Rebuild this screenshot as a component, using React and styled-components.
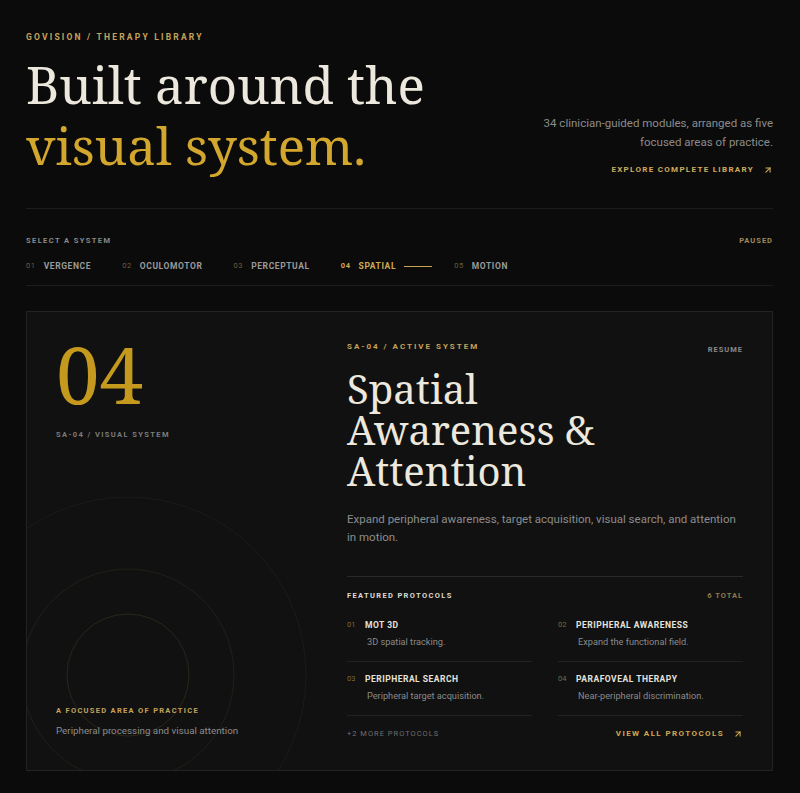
import styled, { createGlobalStyle } from 'styled-components';
import { ArrowUpRight } from 'lucide-react';

const GlobalStyle = createGlobalStyle`
  html, body {
    margin: 0;
    padding: 0;
    background: #0b0b0b;
  }
  body {
    font-family: Roboto, 'Noto Sans', sans-serif;
    -webkit-font-smoothing: antialiased;
  }
  * { box-sizing: border-box; }
`;

const serif = `'Noto Serif', 'Liberation Serif', 'DejaVu Serif', serif`;

const Page = styled.div`
  padding: 31px 27px 24px 26px;
  min-height: 793px;
  background: #0b0b0b;
`;

const Label = styled.div`
  font-family: Roboto, sans-serif;
  font-size: ${(p) => p.size || 8}px;
  font-weight: ${(p) => (p.light ? 400 : 700)};
  letter-spacing: ${(p) => p.spacing ?? 2}px;
  text-transform: uppercase;
  line-height: 12px;
  color: ${(p) => p.color || '#8a8a8a'};
  display: flex;
  align-items: center;
  gap: 8px;
  white-space: nowrap;
`;

const Header = styled.header`
  display: flex;
  justify-content: space-between;
  align-items: flex-end;
  padding-bottom: 32px;
  border-bottom: 1px solid #1c1c1c;
`;

const HeroTitle = styled.h1`
  margin: 11px 0 0;
  font-family: ${serif};
  font-weight: 400;
  font-size: 51px;
  line-height: 61px;
  color: #ece8de;
  & span {
    display: block;
    color: #d3a72d;
  }
`;

const Intro = styled.div`
  display: flex;
  flex-direction: column;
  align-items: flex-end;
  gap: 12px;
`;

const IntroText = styled.p`
  margin: 0;
  text-align: right;
  font-size: 11.5px;
  line-height: 19px;
  color: #8b8b8b;
  max-width: 236px;
`;

const LinkRow = styled(Label)`
  gap: 9px;
`;

const Nav = styled.nav`
  padding: 26px 0 13px;
  border-bottom: 1px solid #1c1c1c;
  display: flex;
  flex-direction: column;
  gap: 13px;
`;

const NavHead = styled.div`
  display: flex;
  justify-content: space-between;
`;

const Tabs = styled.div`
  display: flex;
  gap: 31px;
`;

const Tab = styled.div`
  display: flex;
  align-items: center;
  gap: 8px;
  font-size: 8.5px;
  font-weight: 700;
  letter-spacing: 0.6px;
  line-height: 12px;
  color: ${(p) => (p.active ? '#d0aa55' : '#9a9a9a')};
  & small {
    font-size: 7.5px;
    font-weight: ${(p) => (p.active ? 700 : 400)};
    color: ${(p) => (p.active ? '#d0aa55' : '#6a5f3e')};
    letter-spacing: 0.6px;
  }
`;

const ActiveLine = styled.i`
  display: block;
  width: 28px;
  height: 1px;
  background: #c9a452;
  margin: 0 -9px 0 0;
`;

const Card = styled.section`
  position: relative;
  margin-top: 25px;
  background: #111111;
  border: 1px solid #232323;
  padding: 29px 29px 30px;
  display: grid;
  grid-template-columns: 261px 1fr;
  gap: 30px;
  overflow: hidden;
`;

const Progress = styled.div`
  position: absolute;
  left: 0;
  bottom: -1px;
  height: 1px;
  background: #4b4224;
`;

const Rings = styled.svg`
  position: absolute;
  left: 0;
  top: 0;
  pointer-events: none;
`;

const Side = styled.div`
  position: relative;
  display: flex;
  flex-direction: column;
  justify-content: space-between;
  padding-bottom: 2px;
`;

const BigNumber = styled.div`
  font-family: ${serif};
  font-size: 78px;
  line-height: 62px;
  color: #c4991d;
  margin: 2px 0 24px;
`;

const SideNote = styled.div`
  display: flex;
  flex-direction: column;
  gap: 7px;
`;

const SideText = styled.p`
  margin: 0;
  font-size: 9.8px;
  line-height: 14px;
  color: #8c8c8c;
`;

const Main = styled.div`
  display: flex;
  flex-direction: column;
`;

const MainHead = styled.div`
  display: flex;
  justify-content: space-between;
  align-items: flex-start;
  & > :last-child {
    margin-top: 3px;
  }
`;

const CardTitle = styled.h2`
  margin: 12px 0 0;
  font-family: ${serif};
  font-weight: 400;
  font-size: 40px;
  line-height: 41px;
  color: #ece8de;
`;

const Description = styled.p`
  margin: 19px 0 0;
  font-size: 11.5px;
  line-height: 18px;
  color: #8c8c8c;
`;

const Protocols = styled.div`
  margin-top: 30px;
  border-top: 1px solid #2a2a2a;
  padding-top: 13px;
`;

const ProtoHead = styled.div`
  display: flex;
  justify-content: space-between;
  margin-bottom: 17px;
`;

const ProtoGrid = styled.div`
  display: grid;
  grid-template-columns: 1fr 1fr;
  column-gap: 26px;
`;

const Item = styled.div`
  display: grid;
  grid-template-columns: 18px 1fr;
  row-gap: 4px;
  padding: 11px 0 12px;
  border-bottom: 1px solid #222;
  &:nth-child(-n + 2) {
    padding-top: 0;
  }
`;

const ItemNum = styled.span`
  font-size: 7.5px;
  line-height: 12px;
  color: #7a6a3e;
`;

const ItemTitle = styled.span`
  font-size: 8.5px;
  font-weight: 700;
  letter-spacing: 0.5px;
  line-height: 12px;
  color: #e6e3dc;
  text-transform: uppercase;
`;

const ItemDesc = styled.span`
  grid-column: 2;
  padding-left: 2px;
  font-size: 9.2px;
  line-height: 14px;
  color: #8a8a8a;
`;

const ProtoFoot = styled.div`
  display: flex;
  justify-content: space-between;
  align-items: center;
  padding-top: 12px;
`;

const tabs = [
  ['01', 'Vergence'],
  ['02', 'Oculomotor'],
  ['03', 'Perceptual'],
  ['04', 'Spatial'],
  ['05', 'Motion'],
];

const protocols = [
  ['01', 'MOT 3D', '3D spatial tracking.'],
  ['02', 'Peripheral Awareness', 'Expand the functional field.'],
  ['03', 'Peripheral Search', 'Peripheral target acquisition.'],
  ['04', 'Parafoveal Therapy', 'Near-peripheral discrimination.'],
];

export default function App() {
  return (
    <Page>
      <GlobalStyle />
      <Header>
        <div>
          <Label size={8.5} color="#c6a35a" spacing={2.2}>
            GoVision / Therapy Library
          </Label>
          <HeroTitle>
            Built around the
            <span>visual system.</span>
          </HeroTitle>
        </div>
        <Intro>
          <IntroText>34 clinician-guided modules, arranged as five focused areas of practice.</IntroText>
          <LinkRow size={8} color="#d0ab5c" spacing={1.3}>
            Explore complete library
            <ArrowUpRight size={10} strokeWidth={2.6} />
          </LinkRow>
        </Intro>
      </Header>

      <Nav>
        <NavHead>
          <Label size={7.5} spacing={1.4} color="#8a8a8a">Select a system</Label>
          <Label size={7.5} spacing={1} color="#a08b5c">Paused</Label>
        </NavHead>
        <Tabs>
          {tabs.map(([n, name]) => (
            <Tab key={n} active={n === '04'}>
              <small>{n}</small>
              {name.toUpperCase()}
              {n === '04' && <ActiveLine />}
            </Tab>
          ))}
        </Tabs>
      </Nav>

      <Card>
        <Rings width="320" height="458" viewBox="0 0 320 458">
          <circle cx="101" cy="363" r="61" fill="none" stroke="#2a2619" strokeWidth="1" />
          <circle cx="101" cy="363" r="106" fill="none" stroke="#231f16" strokeWidth="1" />
          <circle cx="101" cy="363" r="178" fill="none" stroke="#1d1b16" strokeWidth="1" />
        </Rings>
        <Side>
          <div>
            <BigNumber>04</BigNumber>
            <Label size={7.5} spacing={1.4} color="#7c7c7c">SA-04 / Visual System</Label>
          </div>
          <SideNote>
            <Label size={7.5} spacing={1.3} color="#c6a35a">A focused area of practice</Label>
            <SideText>Peripheral processing and visual attention</SideText>
          </SideNote>
        </Side>

        <Main>
          <MainHead>
            <Label size={8} spacing={2} color="#c6a35a">SA-04 / Active System</Label>
            <Label size={7.5} spacing={1} color="#8a8a8a">Resume</Label>
          </MainHead>
          <CardTitle>
            Spatial
            <br />
            Awareness &amp;
            <br />
            Attention
          </CardTitle>
          <Description>
            Expand peripheral awareness, target acquisition, visual search, and attention in motion.
          </Description>

          <Protocols>
            <ProtoHead>
              <Label size={7.5} spacing={1.35} color="#dedbd4">Featured Protocols</Label>
              <Label size={7.5} spacing={1} color="#8e7a4c">6 Total</Label>
            </ProtoHead>
            <ProtoGrid>
              {protocols.map(([n, title, desc]) => (
                <Item key={n}>
                  <ItemNum>{n}</ItemNum>
                  <ItemTitle>{title}</ItemTitle>
                  <ItemDesc>{desc}</ItemDesc>
                </Item>
              ))}
            </ProtoGrid>
            <ProtoFoot>
              <Label size={7.5} spacing={1} light color="#6f6f6f">+2 More Protocols</Label>
              <LinkRow size={8} spacing={1.4} color="#cfa852">
                View all protocols
                <ArrowUpRight size={10} strokeWidth={2.6} />
              </LinkRow>
            </ProtoFoot>
          </Protocols>
        </Main>
        <Progress style={{ width: '39%' }} />
      </Card>
    </Page>
  );
}
